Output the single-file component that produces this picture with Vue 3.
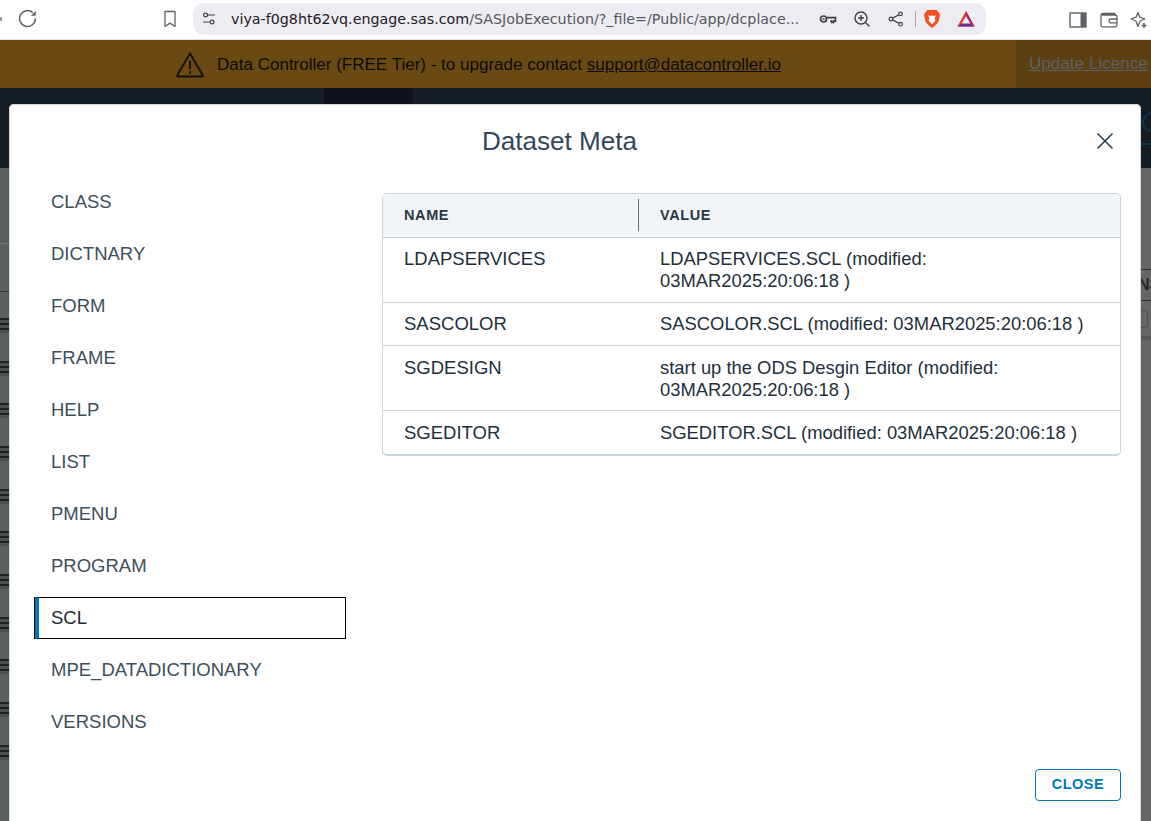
<script setup>
const sections = ['CLASS', 'DICTNARY', 'FORM', 'FRAME', 'HELP', 'LIST', 'PMENU', 'PROGRAM', 'SCL', 'MPE_DATADICTIONARY', 'VERSIONS']
const active = 'SCL'
const rows = [
  { name: 'LDAPSERVICES', value: 'LDAPSERVICES.SCL (modified: 03MAR2025:20:06:18 )' },
  { name: 'SASCOLOR', value: 'SASCOLOR.SCL (modified: 03MAR2025:20:06:18 )' },
  { name: 'SGDESIGN', value: 'start up the ODS Desgin Editor (modified: 03MAR2025:20:06:18 )' },
  { name: 'SGEDITOR', value: 'SGEDITOR.SCL (modified: 03MAR2025:20:06:18 )' }
]
const bgRows = [318, 361, 403, 446, 489, 531, 574, 617, 659, 702, 745]
</script>

<template>
  <div class="page">
    <header class="toolbar">
      <span class="back-dot"></span>
      <svg class="ic reload" viewBox="0 0 18 18" width="19" height="19" fill="none" stroke="#5f6368" stroke-width="1.4">
        <path d="M16.500 9a7.500 7.500 0 1 1-2.400-5.500" />
        <path d="M16.800 1.800v4.600h-4.600z" fill="#5f6368" stroke="none" />
      </svg>
      <svg class="ic bookmark" viewBox="0 0 14 18" width="14" height="18" fill="none" stroke="#5f6368" stroke-width="1.3">
        <path d="M2 1.500h10v15l-5-3.400-5 3.400z" stroke-linejoin="round" />
      </svg>
      <div class="omnibox">
        <svg class="ic" viewBox="0 0 14 14" width="14" height="14" fill="none" stroke="#3c4043" stroke-width="1.2">
          <circle cx="3.500" cy="3" r="1.900" />
          <path d="M6 3h7M1 10h6.500" />
          <circle cx="10" cy="10" r="1.900" />
        </svg>
        <span class="url"><span class="host">viya-f0g8ht62vq.engage.sas.com</span>/SASJobExecution/?_file=/Public/app/dcplace...</span>
        <div class="omni-icons">
          <svg class="key" viewBox="0 0 18 12" width="18" height="12" fill="none" stroke="#3c4043" stroke-width="1.7">
            <circle cx="4.500" cy="6" r="3" />
            <path d="M7.500 4.700h9v3.500h-1.800v1.300h-2v-1.300h-1.500M3.500 6h2" />
          </svg>
          <svg viewBox="0 0 18 18" width="18" height="18" fill="none" stroke="#3c4043" stroke-width="1.4">
            <circle cx="8" cy="8" r="6" />
            <path d="M8 5v6M5 8h6M12.500 12.500l4 4" />
          </svg>
          <svg viewBox="0 0 16 16" width="16" height="16" fill="none" stroke="#3c4043" stroke-width="1.200">
            <circle cx="3" cy="8" r="1.800" />
            <circle cx="12.500" cy="2.800" r="1.800" />
            <circle cx="12.500" cy="13.200" r="1.800" />
            <path d="M4.600 7.100l6.300-3.400M4.600 8.900l6.300 3.400" />
          </svg>
          <span class="omni-sep"></span>
          <svg viewBox="0 0 18 20" width="18" height="20">
            <path d="M4.500 1h9l2.500 2.800 1 2-1.500 7-3.500 4L9 19l-3-2.200-3.500-4-1.500-7 1-2z" fill="#f4511e" />
            <path d="M5 6.500l3 .5 1-.8 1 .8 3-.5-1.500 3 1 2-3.500 4-3.500-4 1-2z" fill="#fff" />
          </svg>
          <svg class="bat" viewBox="0 0 18 18" width="18" height="18">
            <path d="M9 1l8.500 15.500H.500z" fill="#e8352a" />
            <path d="M.500 16.500h17L9 11.500z" fill="#662d91" />
            <path d="M9 1l8.500 15.500L9 11.500z" fill="#a4296e" />
            <path d="M9 6l4.300 7.600H4.700z" fill="#ecebf1" />
          </svg>
        </div>
      </div>
      <div class="right-icons">
        <svg viewBox="0 0 18 16" width="18" height="16">
          <rect x="1" y="1" width="16" height="14" fill="#fff" stroke="#5f6368" stroke-width="1.400" />
          <rect x="11.500" y="1" width="5.500" height="14" fill="#5f6368" />
        </svg>
        <svg viewBox="0 0 18 16" width="18" height="16" fill="none" stroke="#5f6368" stroke-width="1.300">
          <path d="M15 3V1.500H3a1.800 1.800 0 0 0-2 2v9.500a1.800 1.800 0 0 0 2 1.800h12a1.800 1.800 0 0 0 2-1.800V5a1.800 1.800 0 0 0-2-2H2" />
          <path d="M17 7h-6a1.700 1.700 0 0 0 0 3.800h6" />
        </svg>
        <svg viewBox="0 0 18 18" width="18" height="18" fill="none" stroke="#5f6368" stroke-width="1.300">
          <path d="M8 1.500l1.800 4.700 5 1.800-4.700 2-2.100 5.500-2.100-5.500L1 8l5-1.800z" stroke-linejoin="round" />
          <path d="M14 12v5M11.500 14.500h5" stroke-width="1.500" />
        </svg>
      </div>
    </header>

    <div class="banner">
      <div class="banner-msg">
        <svg viewBox="0 0 30 28" width="30" height="27" fill="none" stroke="#111" stroke-width="2">
          <path d="M15 2.500L1.800 25.200a.8.8 0 0 0 .7 1.200h25a.8.8 0 0 0 .7-1.200z" stroke-linejoin="round" />
          <path d="M15 10v9M15 21v2.500" />
        </svg>
        <span class="banner-text">Data Controller (FREE Tier) - to upgrade contact <a class="mail">support@datacontroller.io</a></span>
      </div>
      <div class="licence"><a>Update Licence</a></div>
    </div>

    <div class="navbar">
      <span class="nav-active"></span>
      <svg class="nav-logo" viewBox="0 0 10 52" width="10" height="52" fill="none" stroke="#0d3650" stroke-width="2">
        <circle cx="11" cy="14" r="9" />
        <path d="M0 36h10" />
      </svg>
    </div>

    <div class="backdrop-area">
      <div class="bg-right"></div>
      <div class="bg-line bg-left-faint"></div>
      <div class="bg-line bg-left-dark"></div>
      <div class="bg-line bg-right-a"></div>
      <div class="bg-line bg-right-b"></div>
      <div class="bg-head">NS</div>
      <div class="bg-box"></div>
      <div class="bg-band"></div>
      <div v-for="y in bgRows" :key="y" class="bg-glyph" :style="{ top: (y - 168) + 'px' }"></div>
    </div>

    <section class="modal">
      <h1 class="title">Dataset Meta</h1>
      <svg class="close-x" viewBox="0 0 18 18" width="18" height="18" fill="none" stroke="#2d4150" stroke-width="1.600">
        <path d="M1.500 1.500l15 15M16.500 1.500l-15 15" />
      </svg>
      <div class="body">
        <nav class="side">
          <button v-for="s in sections" :key="s" class="side-item" :class="{ active: s === active }">{{ s }}</button>
        </nav>
        <div class="grid">
          <div class="row head">
            <div class="cell name">NAME</div>
            <div class="cell value"><span class="sep"></span>VALUE</div>
          </div>
          <div v-for="r in rows" :key="r.name" class="row">
            <div class="cell name">{{ r.name }}</div>
            <div class="cell value">{{ r.value }}</div>
          </div>
        </div>
      </div>
      <button class="close-btn">CLOSE</button>
    </section>
  </div>
</template>

<style scoped>
.page {
  position: relative;
  width: 1151px;
  height: 821px;
  overflow: hidden;
  display: flex;
  flex-direction: column;
  font-family: "Liberation Sans", Arial, sans-serif;
  background: #5b5f5f;
}
.toolbar {
  height: 39px;
  flex: none;
  background: #fff;
  border-bottom: 1px solid #e3e3e6;
  display: flex;
  align-items: center;
  position: relative;
}
.back-dot {
  width: 2px;
  height: 4px;
  background: #9a9ca0;
  margin-right: 16px;
  margin-top: -1px;
}
.reload { margin-right: 126px; margin-top: -2px; }
.bookmark { margin-right: 16px; margin-top: -1px; }
.omnibox {
  width: 793px;
  height: 32px;
  margin-top: -1px;
  box-sizing: border-box;
  background: #edecf2;
  border-radius: 11px;
  display: flex;
  align-items: center;
  padding-left: 9px;
}
.url {
  margin-left: 15px;
  font-family: "DejaVu Sans", sans-serif;
  font-size: 14.25px;
  color: #55585e;
  white-space: nowrap;
  width: 570px;
  overflow: hidden;
}
.host { color: #1f2024; }
.omni-icons {
  display: flex;
  align-items: center;
  margin-left: 18px;
  gap: 17px;
}
.key { margin-right: -1px; }
.omni-sep {
  width: 1px;
  height: 16px;
  background: #a5a6ab;
  margin: 0 -10px 0 -6px;
}
.bat { margin-left: -1px; }
.right-icons {
  display: flex;
  align-items: center;
  gap: 12.5px;
  margin-left: 83px;
}
.banner {
  height: 48px;
  flex: none;
  background: #6a4a12;
  display: flex;
  color: #0c0c0c;
  font-size: 17.03px;
}
.banner-msg {
  display: flex;
  align-items: center;
  gap: 12px;
  margin-left: 175px;
  width: 841px;
  box-sizing: border-box;
}
.banner-text { padding-top: 2px; }
.mail { text-decoration: underline; }
.licence {
  flex: 1;
  background: #5c4011;
  padding: 14px 0 0 13px;
  color: #5d6064;
  font-size: 17.1px;
  white-space: nowrap;
  overflow: hidden;
}
.licence a { text-decoration: underline; }
.navbar {
  height: 80px;
  flex: none;
  background: #141c24;
  position: relative;
}
.nav-active {
  position: absolute;
  left: 324px;
  top: 0;
  width: 89px;
  height: 16px;
  background: #0d1319;
}
.nav-logo {
  position: absolute;
  left: 1141px;
  top: 20px;
}
.backdrop-area {
  flex: 1;
  position: relative;
}
.bg-right {
  position: absolute;
  left: 1141px;
  top: 0;
  right: 0;
  bottom: 0;
  background: #666;
}
.bg-line {
  position: absolute;
  height: 1px;
}
.bg-left-faint { left: 0; width: 9px; top: 75px; background: #6f7272; }
.bg-left-dark { left: 0; width: 9px; top: 123px; background: #353838; }
.bg-right-a { left: 1141px; right: 0; top: 101px; background: #2f3234; }
.bg-right-b { left: 1141px; right: 0; top: 132px; background: #2f3234; }
.bg-head {
  position: absolute;
  left: 1138px;
  top: 108px;
  font-size: 16px;
  font-weight: 700;
  color: #24282b;
}
.bg-box {
  position: absolute;
  left: 1140px;
  top: 142px;
  width: 6px;
  height: 16px;
  border: 1px solid #505252;
  border-radius: 2px;
}
.bg-band {
  position: absolute;
  left: 1141px;
  right: 0;
  top: 168px;
  height: 4px;
  background: #565858;
}
.bg-glyph {
  position: absolute;
  left: 0;
  width: 9px;
  height: 15px;
  background: repeating-linear-gradient(#1d2122 0 2px, #4c5050 2px 5px);
}
.modal {
  position: absolute;
  left: 9px;
  top: 104px;
  width: 1132px;
  height: 740px;
  box-sizing: border-box;
  background: #fff;
  border-radius: 5px;
  box-shadow: inset 0 0 0 1px #d3d9dc;
  padding: 0 20px 0 25px;
  display: flex;
  flex-direction: column;
}
.title {
  margin: 20px 0 0;
  font-size: 26.1px;
  line-height: 34px;
  font-weight: 400;
  color: #33475a;
  text-align: center;
  padding-right: 36px;
}
.close-x {
  position: absolute;
  right: 27px;
  top: 28px;
}
.body {
  display: flex;
  margin-top: 23px;
  gap: 36px;
  align-items: flex-start;
}
.side {
  width: 312px;
  flex: none;
  display: flex;
  flex-direction: column;
  gap: 10px;
}
.side-item {
  height: 42px;
  box-sizing: border-box;
  border: none;
  background: none;
  text-align: left;
  padding: 0 0 0 17px;
  font: 400 18.5px "Liberation Sans", Arial, sans-serif;
  color: #3d4f5a;
}
.side-item.active {
  border: 1px solid #000;
  border-left: 4px solid #0079b8;
  box-shadow: -1px 0 0 #000;
  margin-left: 1px;
  padding-left: 12px;
  color: #1e2c36;
}
.grid {
  flex: 1;
  margin-top: 12px;
  border: 1px solid #cbd4da;
  border-bottom-width: 2px;
  border-radius: 5px;
  overflow: hidden;
  font-size: 18.5px;
  line-height: 21.5px;
  color: #1e2f3b;
}
.row {
  display: grid;
  grid-template-columns: 256px 1fr;
  border-top: 1px solid #cbd4da;
}
.row:first-child { border-top: none; }
.row:nth-child(3) { height: 43px; box-sizing: border-box; }
.row:nth-child(4) { height: 65px; box-sizing: border-box; }
.row:nth-child(5) { height: 44px; box-sizing: border-box; }
.row:nth-child(4) .cell,
.row:nth-child(5) .cell { padding-top: 11px; padding-bottom: 9px; }
.cell {
  padding: 10px 21px 11px;
}
.cell.value { font-size: 18.4px; }
.head {
  background: #f1f5f8;
  height: 43px;
  font-weight: 700;
  letter-spacing: 0.6px;
  color: #283a46;
}
.head .cell {
  font-size: 14.5px;
  padding-top: 11px;
  position: relative;
}
.sep {
  position: absolute;
  left: -1px;
  top: 5px;
  width: 1px;
  height: 32px;
  background: #5d7280;
}
.close-btn {
  position: absolute;
  right: 20px;
  top: 665px;
  width: 86px;
  height: 32px;
  box-sizing: border-box;
  background: #fff;
  border: 1px solid #0079b8;
  border-radius: 4px;
  color: #0079b8;
  padding: 0 0 2px;
  font: 700 14.5px "Liberation Sans", Arial, sans-serif;
  letter-spacing: 0.5px;
}
</style>
